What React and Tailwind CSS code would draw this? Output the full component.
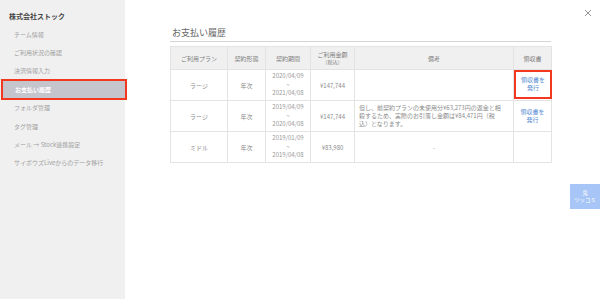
import React from "react";

const font = { fontFamily: '"Noto Sans CJK JP", "Noto Sans", sans-serif' };

const menu = [
  "チーム情報",
  "ご利用状況の確認",
  "決済情報入力",
  "お支払い履歴",
  "フォルダ管理",
  "タグ管理",
  "メール → Stock連携設定",
  "サイボウズLiveからのデータ移行",
];

const rows = [
  { plan: "ラージ", type: "年次", from: "2020/04/09", to: "2021/04/08", price: "¥147,744", note: null, receipt: true, highlight: true },
  {
    plan: "ラージ", type: "年次", from: "2019/04/09", to: "2020/04/08", price: "¥147,744",
    note: ["但し、前契約プランの未使用分¥63,273円の返金と相", "殺するため、実際のお引落し金額は¥84,471円（税", "込）となります。"],
    receipt: true,
  },
  { plan: "ミドル", type: "年次", from: "2019/01/09", to: "2019/04/08", price: "¥83,980", note: "-", receipt: false },
];

export default function App() {
  return (
    <div className="flex w-[600px] h-[299px] overflow-hidden bg-white" style={font}>
      <aside className="w-[125px] h-full bg-[#f0f0f0] shrink-0 pt-[11px]">
        <div className="pl-[9px] h-[10px] leading-[10px] text-[7px] font-bold text-[#444]">株式会社ストック</div>
        <div className="mt-[4px]">
          {menu.map((m, i) =>
            i === 3 ? (
              <div key={m} className="h-[18.4px] relative">
                <div className="absolute left-[1px] top-[-1.5px] w-[126px] h-[21.5px] bg-[#c5c5cd] border-2 border-[#f2391f] flex items-center pl-[12px] text-[6px] font-bold text-white">
                  {m}
                </div>
              </div>
            ) : (
              <div key={m} className="h-[18.4px] flex items-center pl-[14px] text-[6px] text-[#a0a0a0]">
                {m}
              </div>
            )
          )}
        </div>
      </aside>
      <main className="flex-1 relative">
        <div className="absolute right-[8px] top-[9px]">
          <svg width="8" height="8" viewBox="0 0 8 8">
            <path d="M1 1L7 7M7 1L1 7" stroke="#777" strokeWidth="0.8" />
          </svg>
        </div>
        <div className="ml-[45px] mt-[24px] w-[381px]">
          <div className="pl-[2px] h-[18px] text-[9px] leading-[18px] text-[#666] border-b border-[#d4d4d4]">お支払い履歴</div>
          <table className="mt-[4px] w-[381px] border-collapse table-fixed text-[6px] text-[#8a8a8a]">
            <colgroup>
              <col className="w-[57px]" />
              <col className="w-[38px]" />
              <col className="w-[45px]" />
              <col className="w-[44px]" />
              <col className="w-[159px]" />
              <col className="w-[38px]" />
            </colgroup>
            <thead>
              <tr className="h-[23px] bg-[#f0f0f0] text-[#808080]">
                {["ご利用プラン", "契約形態", "契約期間"].map((h) => (
                  <th key={h} className="font-normal border border-[#e3e3e3] text-center">{h}</th>
                ))}
                <th className="font-normal border border-[#e3e3e3] text-center leading-[7px]">
                  ご利用金額<br /><span className="text-[5px]">（税込）</span>
                </th>
                <th className="font-normal border border-[#e3e3e3] text-center">備考</th>
                <th className="font-normal border border-[#e3e3e3] text-center">領収書</th>
              </tr>
            </thead>
            <tbody>
              {rows.map((r, i) => (
                <tr key={i} className="h-[31px]">
                  <td className="border border-[#e3e3e3] text-center">{r.plan}</td>
                  <td className="border border-[#e3e3e3] text-center">{r.type}</td>
                  <td className="border border-[#e3e3e3] text-center leading-[8.5px] text-[#999]">
                    {r.from}<br />~<br />{r.to}
                  </td>
                  <td className="border border-[#e3e3e3] text-center">{r.price}</td>
                  {Array.isArray(r.note) ? (
                    <td className="border border-[#e3e3e3] leading-[8px] text-left pl-[4px] whitespace-nowrap overflow-hidden">
                      {r.note.map((l) => (
                        <div key={l}>{l}</div>
                      ))}
                    </td>
                  ) : (
                    <td className="border border-[#e3e3e3] text-center">{r.note}</td>
                  )}
                  <td className="border border-[#e3e3e3] text-center relative p-0">
                    {r.receipt && (
                      <div
                        className={
                          "mx-auto flex flex-col items-center justify-center leading-[8px] text-[#5b8fd4] " +
                          (r.highlight ? "w-[38px] h-[29px] border-2 border-[#f2391f] -mt-[2px]" : "")
                        }
                      >
                        <span>領収書を</span>
                        <span>発行</span>
                      </div>
                    )}
                  </td>
                </tr>
              ))}
            </tbody>
          </table>
        </div>
        <div className="absolute right-0 top-[184px] w-[30px] h-[25px] bg-[#a7c5f6] flex flex-col items-center justify-center text-white text-[5.5px] leading-[7px]">
          <span>鬼</span>
          <span>ツッコミ</span>
        </div>
      </main>
    </div>
  );
}
